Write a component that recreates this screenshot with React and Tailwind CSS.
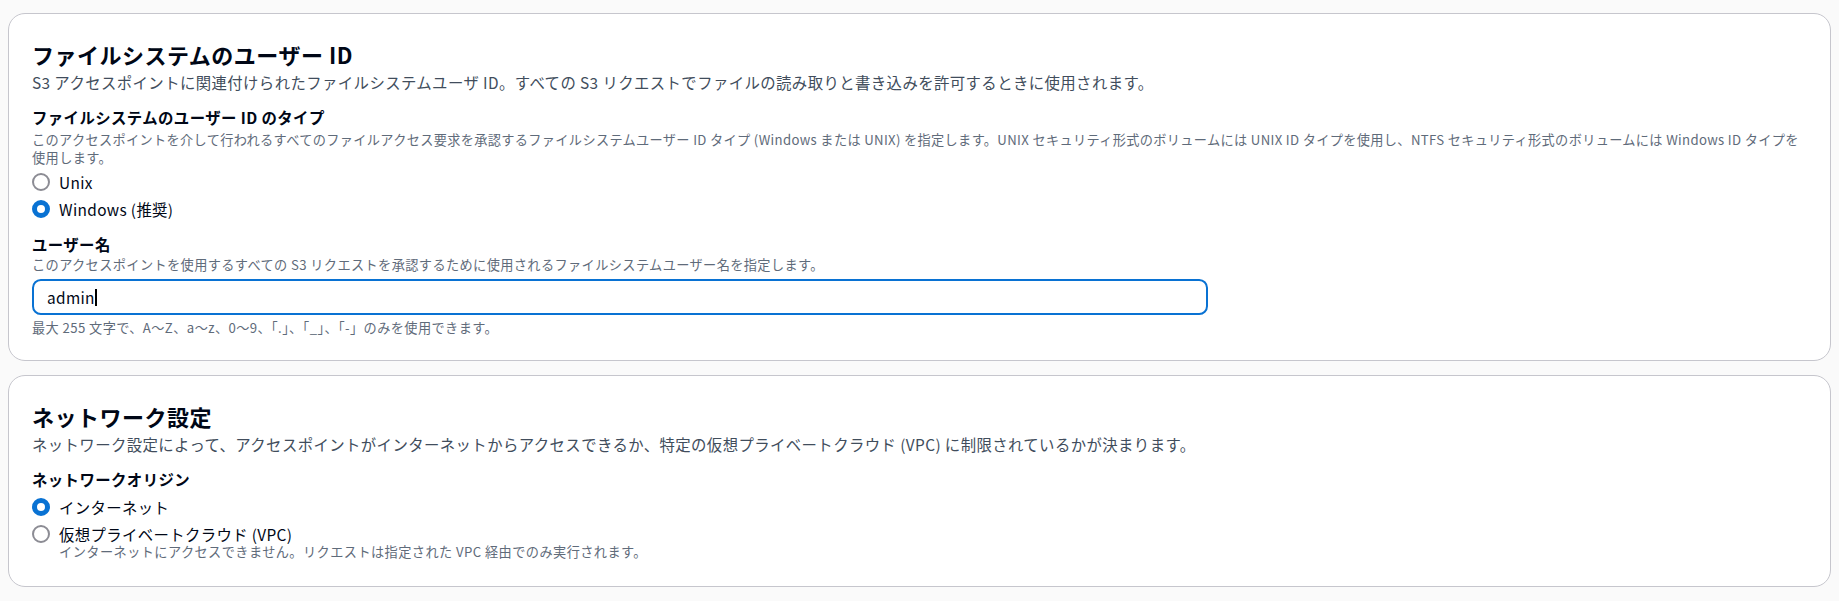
const Radio = ({ checked, label, description }) => {
  return (
    <div className="flex items-start gap-[9.5px]">
      <span
        className={
          checked
            ? "mt-[2.2px] box-border h-[17.6px] w-[17.6px] shrink-0 rounded-full border-[5.3px] border-[#0972d3] bg-white"
            : "mt-[2.2px] box-border h-[17.6px] w-[17.6px] shrink-0 rounded-full border-2 border-[#8c8c94] bg-white"
        }
      />
      <div className="flex flex-col">
        <span className="text-[15.4px] leading-[22px] tracking-[0.35px] text-[#000716]">{label}</span>
        {description && (
          <span className="-mt-[2px] text-[13.2px] leading-[18px] tracking-[0.42px] text-[#5f6b7a]">
            {description}
          </span>
        )}
      </div>
    </div>
  );
};

const App = () => {
  return (
    <div className="min-h-screen bg-[#fafafa] px-2 pt-[13px] font-['Noto_Sans_CJK_JP',sans-serif] text-[#000716]">
      <div className="flex flex-col gap-[14px]">
        {/* file system user id */}
        <section className="rounded-[17px] border border-[#c6c6cd] bg-white px-[23px] pt-[26px] pb-[23px]">
          <h2 className="text-[22px] font-bold leading-[28px] tracking-[0.5px]">
            ファイルシステムのユーザー ID
          </h2>
          <p className="mt-[3px] text-[15.4px] leading-[22px] tracking-[0.4px] text-[#414d5c]">
            S3 アクセスポイントに関連付けられたファイルシステムユーザ ID。すべての S3 リクエストでファイルの読み取りと書き込みを許可するときに使用されます。
          </p>

          <div className="mt-[13px]">
            <div className="text-[15.4px] font-bold leading-[22px] tracking-[0.42px]">
              ファイルシステムのユーザー ID のタイプ
            </div>
            <div className="mt-[3px] text-[13.2px] leading-[18px] text-[#5f6b7a]">
              <div className="whitespace-nowrap tracking-[0.33px]">
                このアクセスポイントを介して行われるすべてのファイルアクセス要求を承認するファイルシステムユーザー ID タイプ (Windows または UNIX) を指定します。UNIX セキュリティ形式のボリュームには UNIX ID タイプを使用し、NTFS セキュリティ形式のボリュームには Windows ID タイプを
              </div>
              <div className="tracking-[0.4px]">使用します。</div>
            </div>
            <div className="mt-[4px] flex flex-col gap-[5px]">
              <Radio label="Unix" />
              <Radio checked label="Windows (推奨)" />
            </div>
          </div>

          <div className="mt-[13px]">
            <div className="text-[15.4px] font-bold leading-[22px] tracking-[0.42px]">ユーザー名</div>
            <div className="mt-[1px] text-[13.2px] leading-[18px] tracking-[0.38px] text-[#5f6b7a]">
              このアクセスポイントを使用するすべての S3 リクエストを承認するために使用されるファイルシステムユーザー名を指定します。
            </div>
            <div className="mt-[5px] flex h-[36px] w-[1176px] items-center rounded-[8.8px] border-2 border-[#0972d3] bg-white pl-[13px]">
              <span className="text-[15.4px] leading-[22px] tracking-[0.35px] text-[#000716]">admin</span>
              <span className="h-[17px] w-[2px] bg-black" />
            </div>
            <div className="mt-[4px] text-[13.2px] leading-[18px] tracking-[0.4px] text-[#5f6b7a]">
              最大 255 文字で、A〜Z、a〜z、0〜9、「.」、「_」、「-」のみを使用できます。
            </div>
          </div>
        </section>

        {/* network */}
        <section className="rounded-[17px] border border-[#c6c6cd] bg-white px-[23px] pt-[26px] pb-[25px]">
          <h2 className="text-[22px] font-bold leading-[28px] tracking-[0.5px]">ネットワーク設定</h2>
          <p className="mt-[3px] text-[15.4px] leading-[22px] tracking-[0.4px] text-[#414d5c]">
            ネットワーク設定によって、アクセスポイントがインターネットからアクセスできるか、特定の仮想プライベートクラウド (VPC) に制限されているかが決まります。
          </p>

          <div className="mt-[13px]">
            <div className="text-[15.4px] font-bold leading-[22px] tracking-[0.42px]">ネットワークオリジン</div>
            <div className="mt-[6px] flex flex-col gap-[5px]">
              <Radio checked label="インターネット" />
              <Radio
                label="仮想プライベートクラウド (VPC)"
                description="インターネットにアクセスできません。リクエストは指定された VPC 経由でのみ実行されます。"
              />
            </div>
          </div>
        </section>
      </div>
    </div>
  );
};

export default App;
